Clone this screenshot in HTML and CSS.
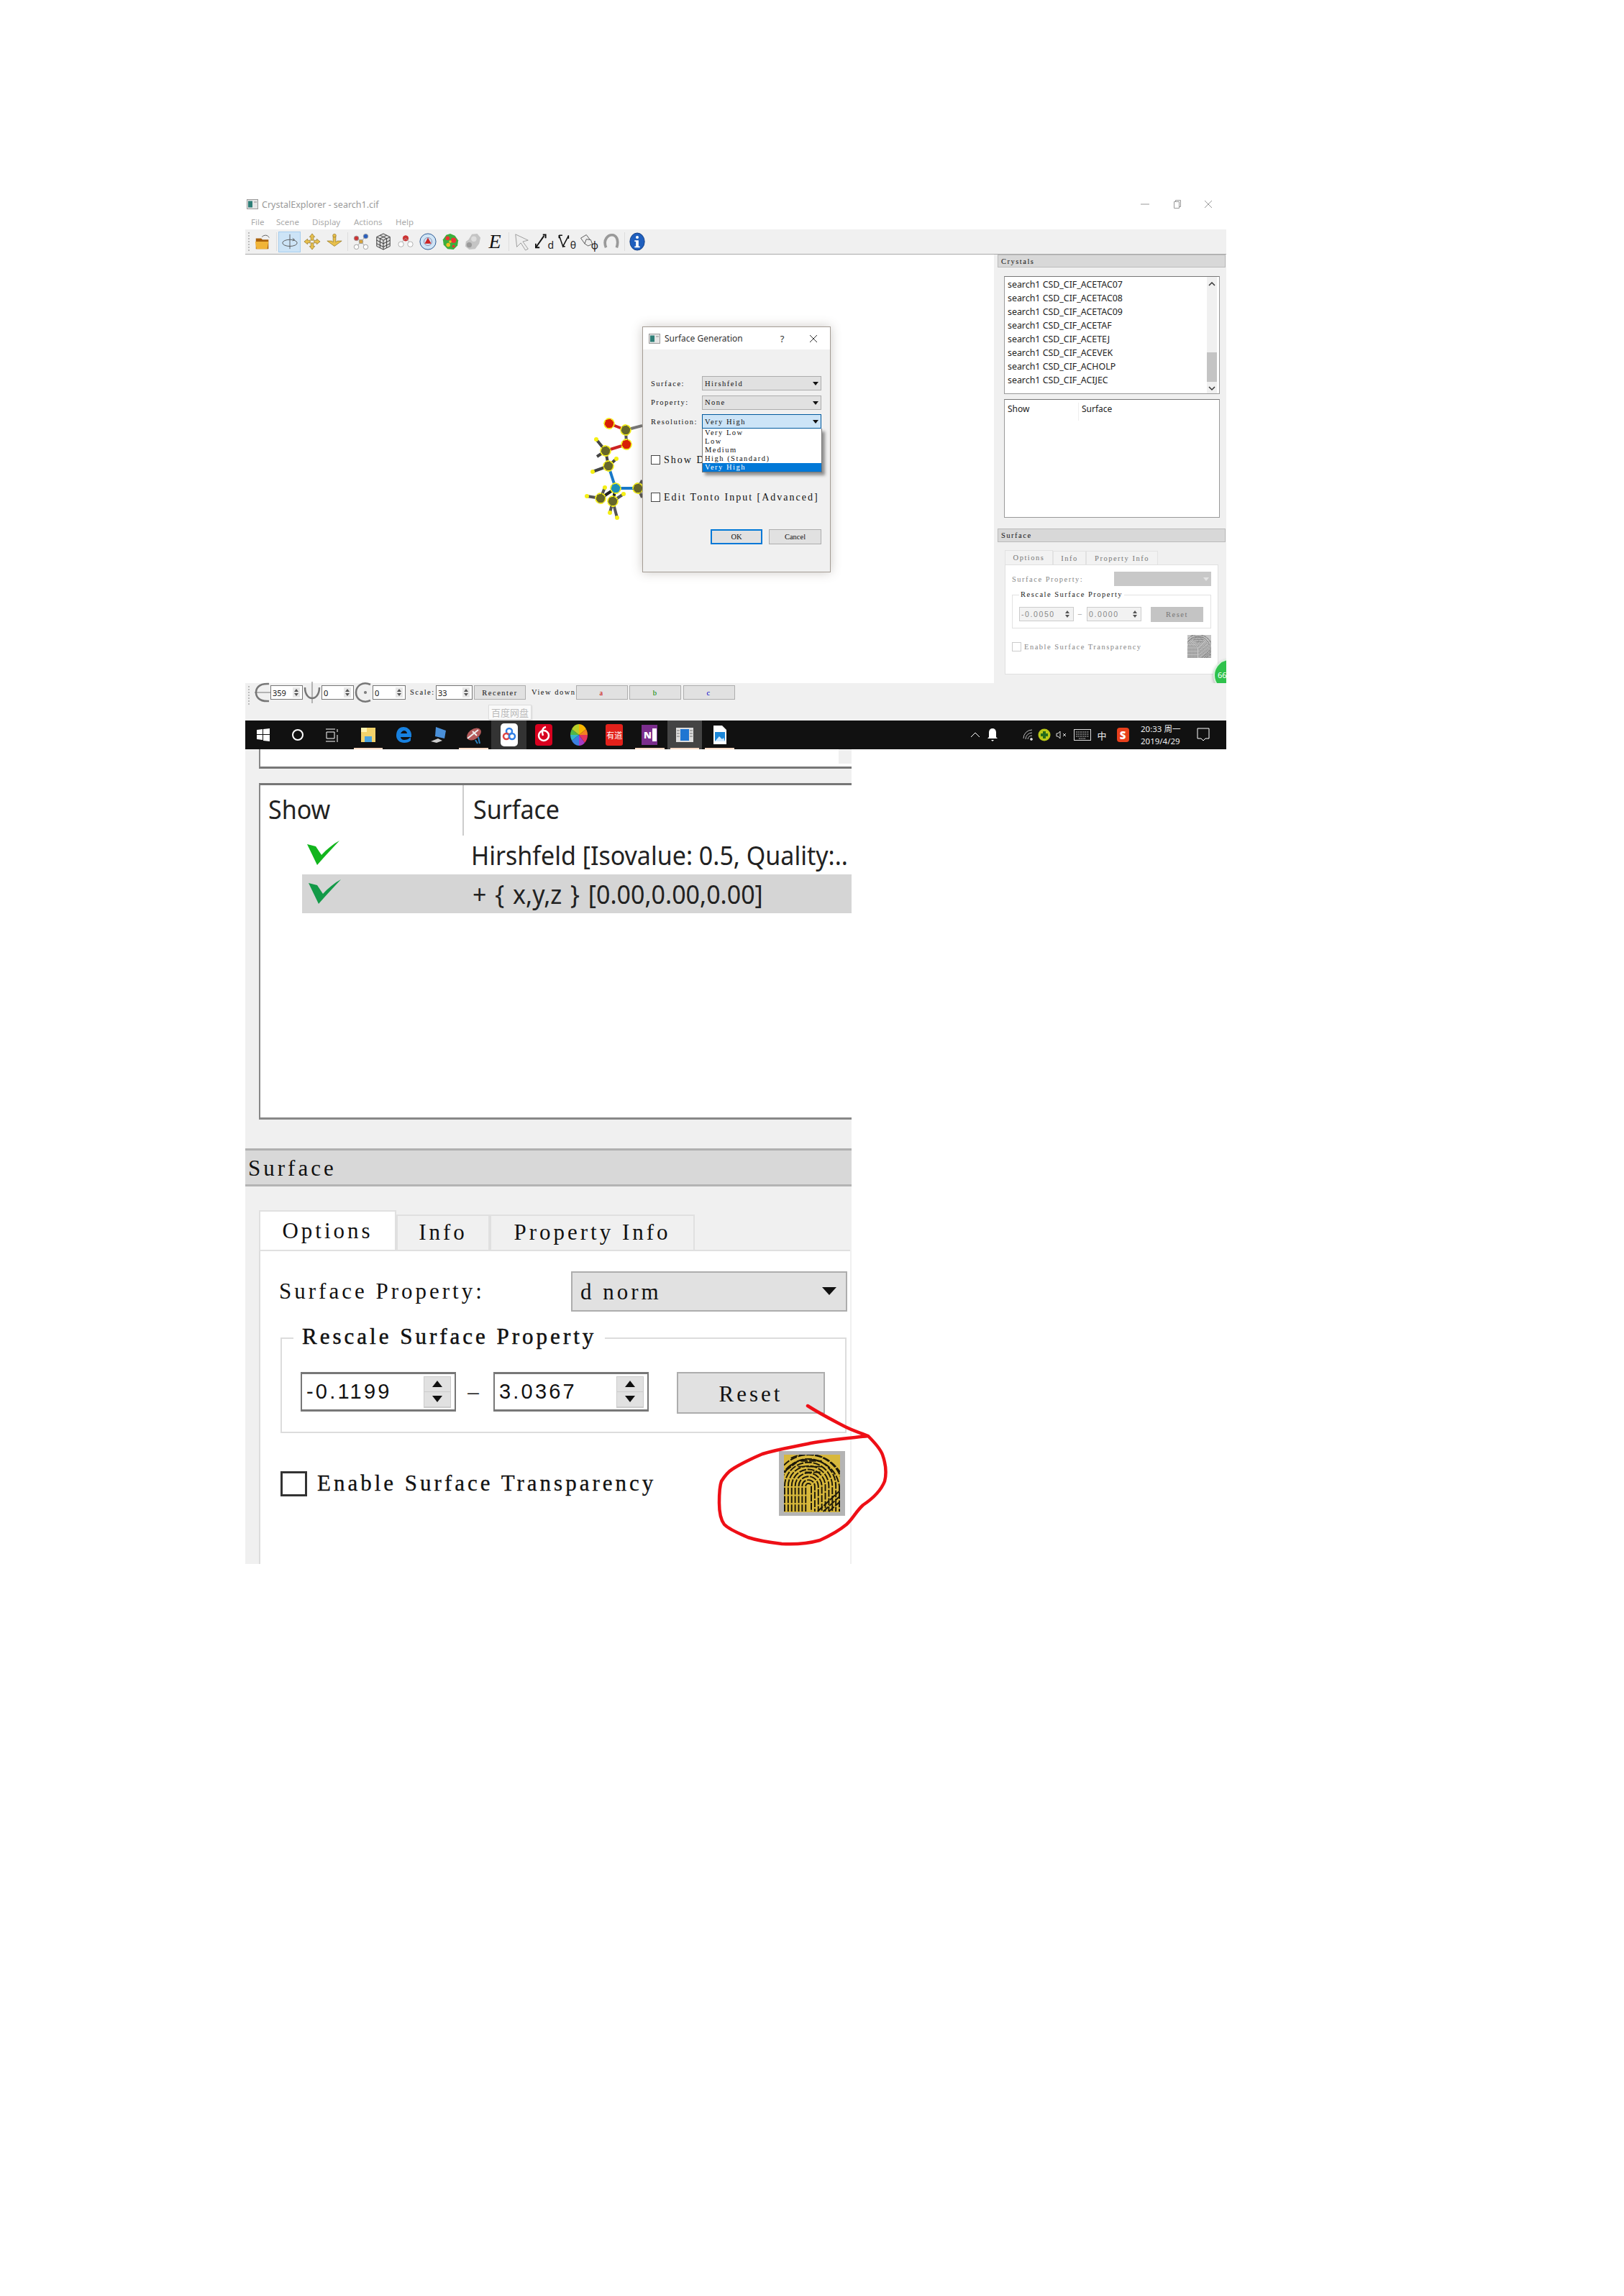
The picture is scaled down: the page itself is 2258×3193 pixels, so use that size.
FILE: index.html
```html
<!DOCTYPE html>
<html lang="en">
<head>
<meta charset="utf-8">
<title>CrystalExplorer surface transparency</title>
<link rel="stylesheet" href="styles.css">
</head>
<body>
<svg class="defs" width="0" height="0">
  <defs>
    <symbol id="fp" viewBox="0 0 80 80">
      <g fill="none" stroke-width="2" stroke-dasharray="10 2">
        <path d="M31 80V44a4 4 0 0 1 8 0V80"/>
        <path d="M26 80V44a9 9 0 0 1 18 0V80"/>
        <path d="M21 80V44a14 14 0 0 1 28 0V80"/>
        <path d="M16 80V44a19 19 0 0 1 38 0V80"/>
        <path d="M11 80V44a24 24 0 0 1 48 0V80"/>
        <path d="M6 80V44a29 29 0 0 1 58 0V80"/>
        <path d="M1 80V44a34 34 0 0 1 68 0V80"/>
        <path d="M-4 60V44a39 39 0 0 1 78 0V80"/>
        <path d="M-4 30a44 44 0 0 1 83 14V80"/>
        <path d="M0 14a49 49 0 0 1 84 30"/>
        <path d="M10 4a54 54 0 0 1 70 20"/>
        <path d="M2 22l16-12M24 8h30M20 16h34M30 24h24M56 80l24-22M48 80l32-30M64 80l16-14"/>
      </g>
    </symbol>
    <symbol id="appicon" viewBox="0 0 16 14">
      <rect x=".5" y=".5" width="15" height="13" fill="#e6e6e6" stroke="#999"/>
      <rect x="2" y="2.5" width="6" height="9" fill="#2f7f78"/>
      <rect x="10" y="3" width="4" height="2" fill="#bbb"/>
    </symbol>
    <symbol id="check" viewBox="0 0 45 34">
      <path d="M0 5l12 3 8 12C27 12 36 5 45 0 36 10 26 20 14 34z"/>
    </symbol>
  </defs>
</svg>

<main class="page">
  <section class="app">
    <div class="titlebar">
      <svg class="appicon"><use href="#appicon"/></svg>
      <span class="apptitle">CrystalExplorer - search1.cif</span>
      <div class="winctl">
        <svg width="14" height="14" viewBox="0 0 14 14"><path d="M1 7h12" stroke="#999"/></svg>
        <svg width="14" height="14" viewBox="0 0 14 14"><path d="M3.5 3.5h7v9h-7zM5.5 3.5v-2h7v9h-2" fill="none" stroke="#999"/></svg>
        <svg width="14" height="14" viewBox="0 0 14 14"><path d="M2 2l10 10M12 2L2 12" stroke="#999"/></svg>
      </div>
    </div>
    <nav class="menubar"><span>File</span><span>Scene</span><span>Display</span><span>Actions</span><span>Help</span></nav>

    <div class="toolbar">
      <i class="grip"></i>
      <span class="tool"><svg viewBox="0 0 26 26"><path d="M3 8h8l2 2h9v14H3z" fill="#a8600c"/><path d="M2 13h20l-2 11H4z" fill="#f1b437"/><path d="M12 6c4-4 9-3 11 1" fill="none" stroke="#555"/></svg></span>
      <i class="sep"></i>
      <span class="tool on"><svg viewBox="0 0 26 26" fill="none" stroke="#555"><path d="M13 2v22"/><ellipse cx="13" cy="15" rx="11" ry="5"/><path d="M17 8l3 2-3 2" /></svg></span>
      <span class="tool"><svg viewBox="0 0 26 26" fill="#e8c04c" stroke="#8a6d1c" stroke-width=".7"><path d="M13 1l4 5h-2v5h-4V6H9zM13 25l-4-5h2v-5h4v5h2zM1 13l5-4v2h4v4H6v2zM25 13l-5 4v-2h-4v-4h4V9z"/></svg></span>
      <span class="tool"><svg viewBox="0 0 26 26" fill="#e8c04c" stroke="#8a6d1c" stroke-width=".7"><path d="M13 20L2 12h7l2 2V5h4v9l2-2h7z"/><circle cx="13" cy="4" r="2.5"/></svg></span>
      <i class="sep"></i>
      <span class="tool"><svg viewBox="0 0 26 26" stroke="#999" fill="#fff"><path d="M7 7l6 6M20 5l-7 8M13 13l-7 8M13 13l7 8" fill="none"/><circle cx="6" cy="8" r="3.5" fill="#c33"/><circle cx="20" cy="5" r="3.5" fill="#2a5fbf"/><circle cx="13" cy="13" r="3" fill="#d9a33a"/><circle cx="6" cy="21" r="3.5"/><circle cx="20" cy="21" r="3.5"/></svg></span>
      <span class="tool"><svg viewBox="0 0 26 26" fill="#ddd" stroke="#333"><path d="M13 1l10 5v14l-10 5-10-5V6z"/><path d="M3 6l10 5 10-5M13 11v14M8 3.500l10 5v14M18 3.500L8 8.500v14M3 11l10 5 10-5M3 16l10 5 10-5" fill="none"/></svg></span>
      <span class="tool"><svg viewBox="0 0 26 26" stroke="#aaa" fill="#fff"><circle cx="13" cy="8" r="4" fill="#c33" stroke="#c33"/><path d="M13 8l-7 7M13 8l7 7" fill="none"/><circle cx="6" cy="17" r="4"/><circle cx="20" cy="17" r="4"/></svg></span>
      <span class="tool"><svg viewBox="0 0 26 26"><circle cx="13" cy="13" r="12" fill="#cfe4f5" stroke="#1f4e8c"/><circle cx="13" cy="13" r="6" fill="none" stroke="#88a"/><path d="M13 7l5 9H8z" fill="#c22"/></svg></span>
      <span class="tool"><svg viewBox="0 0 26 26"><path d="M13 1l7 3 5 7-1 8-6 6-9-1-6-6-1-8 5-7z" fill="#3cae3c"/><circle cx="9" cy="8" r="3" fill="#e33"/><circle cx="18" cy="11" r="4" fill="#e33"/><circle cx="10" cy="18" r="3" fill="#f0c020"/><circle cx="18" cy="20" r="2" fill="#e33"/><circle cx="13" cy="13" r="2" fill="#f0c020"/></svg></span>
      <span class="tool"><svg viewBox="0 0 26 26"><path d="M12 2l8-1 5 6-2 9-6 8-9 1-6-5 1-7 4-3z" fill="#c4c4c4"/><circle cx="8" cy="18" r="4" fill="#9a9a9a"/><circle cx="15" cy="9" r="4" fill="#ddd"/></svg></span>
      <span class="tool glyph-e">E</span>
      <i class="sep"></i>
      <span class="tool"><svg viewBox="0 0 26 26"><path d="M3 2l19 9-8 2 8 11-4 2-7-11-6 6z" fill="#eee" stroke="#999"/></svg></span>
      <span class="tool measure"><svg viewBox="0 0 26 26" fill="none" stroke="#111" stroke-width="2.500"><path d="M2 24L16 4"/><path d="M14 2l5 0 0 6M1 18v7h7" /></svg><b>d</b></span>
      <span class="tool measure"><svg viewBox="0 0 26 26" fill="none" stroke="#111" stroke-width="2"><path d="M3 3l7 20 10-19"/><path d="M3 3h6M3 3v5M20 3v6M9 23h5"/></svg><b>θ</b></span>
      <span class="tool measure"><svg viewBox="0 0 26 26" fill="#eee" stroke="#333"><path d="M2 8l10-6 6 8-9 8z"/><path d="M9 18l3-8 8 1 3 8-8 3z"/></svg><b>ϕ</b></span>
      <span class="tool"><svg viewBox="0 0 26 26" fill="none" stroke="#999" stroke-width="4"><path d="M5 22C0 10 8 3 14 3s11 7 7 19"/></svg></span>
      <i class="sep sep-b"></i>
      <span class="tool"><svg viewBox="0 0 26 26"><ellipse cx="13" cy="13" rx="11" ry="13" fill="#1f5fbe"/><ellipse cx="13" cy="13" rx="11" ry="13" fill="none" stroke="#0d3a80"/><circle cx="13" cy="6.500" r="2.200" fill="#fff"/><path d="M9 11h6v9h2v2H9v-2h2v-7H9z" fill="#fff"/></svg></span>
    </div>

    <div class="workspace">
      <div class="canvas">
        <svg class="molecule" viewBox="800 570 93 160" width="93" height="160">
          <g class="bonds">
            <path d="M870 598L893 592" stroke="#777"/>
            <path d="M847 589L870 598" stroke="#c22"/>
            <path d="M870 598L871 618" stroke="#555"/>
            <path d="M871 618L842 627" stroke="#c22"/>
            <path d="M842 627L829 611M842 627L830 635M842 627L846 648M846 648L857 638M846 648L824 656" stroke="#444"/>
            <path d="M846 648L856 679" stroke="#1878c8"/>
            <path d="M856 679L887 679" stroke="#1878c8"/>
            <path d="M856 679L835 693M856 679L852 697" stroke="#222"/>
            <path d="M835 693L816 690M835 693L841 678M852 697L867 687M852 697L848 713M852 697L858 720M887 679L893 668M887 679L893 692" stroke="#555"/>
          </g>
          <g class="atoms">
            <circle class="o" cx="847" cy="589" r="7"/><circle class="o" cx="871" cy="618" r="7"/>
            <circle class="c" cx="870" cy="598" r="7"/><circle class="c" cx="842" cy="627" r="7"/><circle class="c" cx="846" cy="648" r="7"/><circle class="c" cx="887" cy="679" r="7"/><circle class="c" cx="835" cy="693" r="7"/><circle class="c" cx="852" cy="697" r="7"/>
            <circle class="n" cx="856" cy="679" r="7"/>
          </g>
          <g class="hydrogens">
            <circle cx="829" cy="611" r="3"/><circle cx="857" cy="638" r="3"/><circle cx="824" cy="656" r="3"/><circle cx="816" cy="690" r="3"/><circle cx="841" cy="678" r="3"/><circle cx="867" cy="687" r="3"/><circle cx="848" cy="713" r="3"/><circle cx="858" cy="720" r="3"/>
          </g>
        </svg>

        <div class="dialog">
          <div class="dlg-title">
            <svg class="appicon"><use href="#appicon"/></svg>
            <span class="dlg-name">Surface Generation</span>
            <span class="dlg-help">?</span>
            <svg class="dlg-close" width="12" height="12" viewBox="0 0 12 12"><path d="M1 1l10 10M11 1L1 11" stroke="#333"/></svg>
          </div>
          <div class="dlg-body">
            <div class="dlg-row"><label>Surface:</label><div class="d-combo">Hirshfeld<i class="tri"></i></div></div>
            <div class="dlg-row"><label>Property:</label><div class="d-combo">None<i class="tri"></i></div></div>
            <div class="dlg-row"><label>Resolution:</label><div class="d-combo focus">Very High<i class="tri"></i></div></div>
            <div class="dlg-check first"><i class="box"></i><span>Show De</span></div>
            <div class="dlg-check"><i class="box"></i><span>Edit Tonto Input [Advanced]</span></div>
            <div class="dlg-btns"><button class="d-btn ok">OK</button><button class="d-btn">Cancel</button></div>
          </div>
          <ul class="dropdown">
            <li>Very Low</li><li>Low</li><li>Medium</li><li>High (Standard)</li><li class="sel">Very High</li>
          </ul>
        </div>
      </div>

      <aside class="dock">
        <div class="dock-head">Crystals</div>
        <div class="crystal-list">
          <ul>
            <li>search1 CSD_CIF_ACETAC07</li><li>search1 CSD_CIF_ACETAC08</li><li>search1 CSD_CIF_ACETAC09</li><li>search1 CSD_CIF_ACETAF</li><li>search1 CSD_CIF_ACETEJ</li><li>search1 CSD_CIF_ACEVEK</li><li>search1 CSD_CIF_ACHOLP</li><li>search1 CSD_CIF_ACIJEC</li>
          </ul>
          <div class="vscroll"><svg width="12" height="8" viewBox="0 0 12 8"><path d="M2 6l4-4 4 4" fill="none" stroke="#333" stroke-width="1.500"/></svg><i class="thumb"></i><svg width="12" height="8" viewBox="0 0 12 8"><path d="M2 2l4 4 4-4" fill="none" stroke="#333" stroke-width="1.500"/></svg></div>
        </div>
        <div class="surface-table"><span class="st-show">Show</span><span class="st-surface">Surface</span></div>
        <div class="dock-head second">Surface</div>
        <div class="tabs"><span class="tab active">Options</span><span class="tab">Info</span><span class="tab">Property Info</span></div>
        <div class="panel">
          <div class="p-row"><span>Surface Property:</span><div class="p-combo"><i class="tri pale"></i></div></div>
          <div class="p-group">
            <span class="p-legend">Rescale Surface Property</span>
            <div class="p-spin"><span>-0.0050</span><em class="arrows"><i class="up"></i><i class="dn"></i></em></div>
            <span class="p-dash">–</span>
            <div class="p-spin"><span>0.0000</span><em class="arrows"><i class="up"></i><i class="dn"></i></em></div>
            <div class="p-reset">Reset</div>
          </div>
          <div class="p-trans"><i class="p-box"></i><span>Enable Surface Transparency</span><svg class="p-swatch"><use href="#fp"/></svg></div>
        </div>
      </aside>
      <div class="badge">66</div>
    </div>

    <div class="statusbar">
      <i class="grip"></i>
      <svg class="rot r1" viewBox="0 0 23 30" fill="none" stroke="#777" stroke-width="2.500"><path d="M21 3C6 2 3 10 3 15s3 13 18 12"/><path d="M1 15h22" stroke-width="1"/></svg>
      <div class="s-spin w45"><span>359</span><em class="arrows"><i class="up"></i><i class="dn"></i></em></div>
      <svg class="rot r2" viewBox="0 0 26 30" fill="none" stroke="#777" stroke-width="2.500"><path d="M3 8c0 20 20 20 20 0"/><path d="M13 0v30" stroke-width="1"/></svg>
      <div class="s-spin w45"><span>0</span><em class="arrows"><i class="up"></i><i class="dn"></i></em></div>
      <svg class="rot r2" viewBox="0 0 26 30" fill="none" stroke="#777" stroke-width="2.500"><path d="M23 4C12-1 3 6 3 15s9 16 20 11"/><circle cx="16" cy="15" r=".8" fill="#777"/></svg>
      <div class="s-spin w46"><span>0</span><em class="arrows"><i class="up"></i><i class="dn"></i></em></div>
      <span class="s-label scale">Scale:</span>
      <div class="s-spin w51"><span>33</span><em class="arrows"><i class="up"></i><i class="dn"></i></em></div>
      <div class="s-btn recenter">Recenter</div>
      <span class="s-label viewd">View down:</span>
      <div class="s-btn axis a">a</div>
      <div class="s-btn axis b">b</div>
      <div class="s-btn axis c">c</div>
      <div class="tooltip">百度网盘</div>
    </div>

    <div class="taskbar">
      <div class="tasks">
        <span class="ti"><svg width="22" height="22" viewBox="0 0 22 22" fill="#fff"><path d="M2 4l8-1v7H2zM11 3l9-1v8h-9zM2 11h8v7l-8-1zM11 11h9v9l-9-1z"/></svg></span>
        <span class="ti"><svg width="18" height="18" viewBox="0 0 18 18"><circle cx="9" cy="9" r="7" fill="none" stroke="#fff" stroke-width="2"/></svg></span>
        <span class="ti"><svg width="20" height="22" viewBox="0 0 20 22" fill="none" stroke="#fff"><path d="M2 7h11v9H2zM1 3h13M1 20h13M17 3v4M17 11v10"/></svg></span>
        <span class="ti run"><svg width="24" height="24" viewBox="0 0 24 24"><path d="M2 2h20v20H2z" fill="#f3d36b"/><path d="M2 2h8v6H2z" fill="#fff3b0"/><path d="M7 14h10v8H7z" fill="#4aa3df"/></svg></span>
        <span class="ti"><svg width="22" height="24" viewBox="0 0 22 24"><path d="M11 1C4 1 1 7 1 13s5 10 11 10c4 0 7-1 9-3v-5c-3 3-6 4-9 4-3 0-5-2-5-4h15c1-8-4-14-11-14zM7 10c1-2 3-4 5-4s4 2 4 4z" fill="#1781e0"/></svg></span>
        <span class="ti"><svg width="26" height="26" viewBox="0 0 26 26"><path d="M9 2l14 5-2 11L8 15z" fill="#4a90d9"/><path d="M14 4v12M2 22l10-4 6 3-8 3z" fill="#ccc"/></svg></span>
        <span class="ti run"><svg width="28" height="26" viewBox="0 0 28 26"><ellipse cx="14" cy="12" rx="11" ry="7" transform="rotate(-35 14 12)" fill="#b45a5a"/><path d="M5 18L20 6M12 8l6 6" stroke="#eee" stroke-width="2"/><path d="M16 20l3 5M20 16l2 9" stroke="#2a80c0" stroke-width="2"/></svg></span>
        <span class="ti hover"><svg width="24" height="32" viewBox="0 0 24 32"><rect width="24" height="32" rx="5" fill="#fff"/><circle cx="12" cy="11" r="4" fill="none" stroke="#2f7fe6" stroke-width="2.500"/><circle cx="8" cy="18" r="4" fill="none" stroke="#d44" stroke-width="2.500"/><circle cx="16" cy="18" r="4" fill="none" stroke="#2f7fe6" stroke-width="2.500"/></svg></span>
        <span class="ti"><svg width="24" height="30" viewBox="0 0 24 30"><rect width="24" height="30" rx="4" fill="#d8011f"/><circle cx="12" cy="16" r="7" fill="none" stroke="#fff" stroke-width="2.500"/><path d="M15 4c-5 1-6 6-4 12" fill="none" stroke="#fff" stroke-width="2.500"/></svg></span>
        <span class="ti"><svg width="24" height="30" viewBox="0 0 24 30"><path d="M12 15L12 0a12 15 0 0 1 10 7z" fill="#f7b500"/><path d="M12 15L22 7a12 15 0 0 1 2 8z" fill="#f58220"/><path d="M12 15H24a12 15 0 0 1-4 11z" fill="#e5335d"/><path d="M12 15L20 26a12 15 0 0 1-8 4z" fill="#a43bc4"/><path d="M12 15V30A12 15 0 0 1 2 23z" fill="#3b7fe0"/><path d="M12 15L2 23A12 15 0 0 1 0 15z" fill="#36b4c8"/><path d="M12 15H0A12 15 0 0 1 2 7z" fill="#4fb847"/><path d="M12 15L2 7A12 15 0 0 1 12 0z" fill="#b7cf2a"/></svg></span>
        <span class="ti"><span class="youdao">有道</span></span>
        <span class="ti run"><span class="onenote"><b>N</b><i></i></span></span>
        <span class="ti active run"><svg width="24" height="24" viewBox="0 0 24 24"><rect y="2" width="24" height="20" fill="#ddd"/><rect x="6" y="4" width="12" height="16" fill="#1f76d2"/><path d="M1 6h4M1 10h4M1 14h4M19 6h4M19 10h4M19 14h4" stroke="#777"/></svg></span>
        <span class="ti run"><svg width="20" height="28" viewBox="0 0 20 28"><path d="M1 1h12l6 6v20H1z" fill="#fff"/><path d="M3 10h14v13H3z" fill="#1b87d9"/><path d="M3 23l6-7 4 4 2-2 2 5z" fill="#cfe9ff"/></svg></span>
      </div>
      <div class="tray">
        <span class="tr w20"><svg width="14" height="8" viewBox="0 0 14 8"><path d="M1 7l6-6 6 6" fill="none" stroke="#fff"/></svg></span>
        <span class="tr w28"><svg width="14" height="18" viewBox="0 0 14 18" fill="#fff"><path d="M7 0c3 0 5 2 5 6v6l2 2H0l2-2V6c0-4 2-6 5-6zM5 16h4l-2 2z"/></svg></span>
        <span class="tr w20 ml25"><svg width="16" height="18" viewBox="0 0 16 18" fill="none" stroke="#bbb"><path d="M2 14a12 12 0 0 1 12-12M5 15a9 9 0 0 1 9-9M8 15a6 6 0 0 1 6-5"/><circle cx="13" cy="15" r="1.500" fill="#eee"/></svg></span>
        <span class="tr w24 ml1"><svg width="18" height="20" viewBox="0 0 18 20"><circle cx="9" cy="10" r="8.500" fill="#b9c818"/><path d="M7 5h4v3h3v4h-3v3H7v-3H4V8h3z" fill="#246b1c"/></svg></span>
        <span class="tr w24"><svg width="16" height="14" viewBox="0 0 16 14" fill="none" stroke="#ddd"><path d="M1 5h2l3-3v10L3 9H1zM10 5l4 4M14 5l-4 4"/></svg></span>
        <span class="tr w34"><svg width="24" height="16" viewBox="0 0 24 16" fill="none" stroke="#ddd"><rect x=".5" y=".5" width="23" height="15"/><path d="M3 4h18M3 7h18M3 10h18M7 13h10" stroke-dasharray="1.500 1"/></svg></span>
        <span class="tr w20 zh">中</span>
        <span class="tr w28 ml5"><span class="sogou">S</span></span>
        <span class="clock"><span>20:33 周一</span><span>2019/4/29</span></span>
        <span class="tr w20 ml17"><svg width="18" height="20" viewBox="0 0 18 20" fill="none" stroke="#fff"><path d="M1 1h16v14h-5l-3 3-3-3H1z"/></svg></span>
      </div>
    </div>
  </section>

  <section class="closeup">
    <div class="cu-stub"><i class="cu-stub-scroll"></i></div>
    <div class="cu-table">
      <div class="cu-head"><div class="cu-show"><span class="cu-sans">Show</span></div><div class="cu-surface"><span class="cu-sans">Surface</span></div></div>
      <div class="cu-row">
        <svg class="cu-check bright"><use href="#check"/></svg>
        <span class="cu-sans">Hirshfeld [Isovalue: 0.5, Quality:..</span>
      </div>
      <div class="cu-row selected">
        <svg class="cu-check dull"><use href="#check"/></svg>
        <span class="cu-sans wide">+ { x,y,z } [0.00,0.00,0.00]</span>
      </div>
    </div>
    <div class="cu-dockhead">Surface</div>
    <div class="cu-tabs"><span class="cu-tab active">Options</span><span class="cu-tab info">Info</span><span class="cu-tab prop">Property Info</span></div>
    <div class="cu-panel">
      <div class="cu-prop"><span>Surface Property:</span><div class="cu-combo">d norm<i class="tri big"></i></div></div>
      <div class="cu-group">
        <span class="cu-legend">Rescale Surface Property</span>
        <div class="cu-spin"><span>-0.1199</span><em class="cu-arrows"><b><i class="up"></i></b><b><i class="dn"></i></b></em></div>
        <span class="cu-dash">–</span>
        <div class="cu-spin"><span>3.0367</span><em class="cu-arrows"><b><i class="up"></i></b><b><i class="dn"></i></b></em></div>
        <div class="cu-reset">Reset</div>
      </div>
      <div class="cu-trans"><i class="cu-box"></i><span>Enable Surface Transparency</span><div class="cu-swatch"><svg><use href="#fp"/></svg></div></div>
    </div>
  </section>

  <svg class="scribble" viewBox="990 1950 250 210" width="250" height="210">
    <path d="M1123 1955C1140 1966 1156 1974 1173 1983C1186 1990 1198 1993 1207 1997C1216 2006 1224 2015 1227 2023C1232 2037 1233 2048 1230 2060C1224 2075 1212 2085 1200 2093C1190 2102 1186 2112 1177 2120C1165 2130 1153 2136 1140 2142C1122 2147 1105 2148 1087 2147C1070 2145 1055 2143 1040 2138C1027 2132 1015 2128 1007 2120C1001 2112 1000 2100 1000 2090C1000 2078 1000 2068 1003 2060C1008 2052 1013 2046 1020 2042C1033 2034 1046 2028 1060 2022C1082 2015 1105 2012 1127 2007C1155 2002 1180 2000 1207 1997" fill="none" stroke="#ee0f16" stroke-width="4.500" stroke-linecap="round" stroke-linejoin="round"/>
  </svg>
</main>
</body>
</html>
```
FILE: styles.css
```css
* { box-sizing: border-box; }
html, body { margin: 0; padding: 0; background: #fff; }
body { font-family: "Noto Sans", sans-serif; }
i, em { font-style: normal; display: block; }
ul { list-style: none; margin: 0; padding: 0; }
.defs { position: absolute; }
.page { position: relative; width: 2258px; height: 3193px; padding: 270px 0 0 341px; }

/* small screenshot */
.app { position: relative; width: 1364px; height: 772px; display: flex; flex-direction: column; overflow: hidden; }
.titlebar { height: 30px; display: flex; align-items: center; padding: 0 0 2px 2px; flex: none; }
.appicon { width: 16px; height: 14px; flex: none; }
.apptitle { margin-left: 5px; font-size: 12.5px; color: #999; }
.winctl { margin-left: auto; display: flex; gap: 30px; padding-right: 18px; }
.menubar { height: 19px; flex: none; display: flex; align-items: center; font-size: 11.500px; color: #aaa; padding: 0 0 3px 8px; }
.menubar span:nth-child(1) { width: 35px; }
.menubar span:nth-child(2) { width: 50px; }
.menubar span:nth-child(3) { width: 58px; }
.menubar span:nth-child(4) { width: 58px; }
.toolbar { height: 35px; flex: none; background: #f0f0f0; border-bottom: 1px solid #aaa; display: flex; align-items: center; padding-left: 8.500px; position: relative; }
.grip { position: absolute; left: 4px; top: 4px; bottom: 4px; width: 2px; border-left: 2px dotted #bbb; }
.tool { width: 31px; height: 29px; flex: none; display: flex; align-items: center; justify-content: center; position: relative; }
.tool svg { width: 24px; height: 26px; }
.tool.on { background: #cde4f7; border: 1px solid #a5cdef; }
.sep { width: 6.500px; flex: none; height: 26px; position: relative; }
.sep::after { content: ""; position: absolute; left: 3px; top: 0; bottom: 0; width: 1px; background: #ddd; }
.sep-b { width: 5px; }
.glyph-e { font: italic 28px "Liberation Serif", serif; color: #111; }
.measure svg { width: 20px; height: 22px; margin: -2px 6px 0 0; }
.measure b { position: absolute; right: 2px; bottom: 1px; font: 400 14px "Noto Sans", sans-serif; color: #222; }

.workspace { position: relative; height: 596px; flex: none; display: flex; }
.canvas { position: relative; width: 1041px; flex: none; background: #fff; }
.molecule { position: absolute; left: 459px; top: 216px; }
.bonds path { fill: none; stroke-width: 4; }
.atoms circle { stroke: #f4ee1a; stroke-width: 1.800; stroke-dasharray: 6 1; }
.atoms .o { fill: #d81e05; }
.atoms .c { fill: #66662a; }
.atoms .n { fill: #1d8fb8; }
.hydrogens circle { fill: #f5ef14; }

.dialog { position: absolute; left: 552px; top: 100px; width: 262px; height: 342px; background: #f0f0f0; border: 1px solid #a49c94; box-shadow: 0 0 14px rgba(90, 80, 70, .3); display: flex; flex-direction: column; font: 10.500px "Liberation Serif", serif; letter-spacing: 1.500px; color: #111; }
.dlg-title { height: 31px; flex: none; background: #fff; display: flex; align-items: center; padding-left: 8px; font-family: "Noto Sans", sans-serif; letter-spacing: 0; }
.dlg-name { margin-left: 6px; font-size: 12px; color: #333; }
.dlg-help { margin-left: 52px; font-size: 13px; color: #333; }
.dlg-close { margin-left: 35px; }
.dlg-body { padding: 37px 12px 0 11px; }
.dlg-row { display: flex; align-items: center; height: 20px; margin-bottom: 6.500px; }
.dlg-row label { width: 71px; flex: none; }
.d-combo { width: 167px; height: 20px; background: #e1e1e1; border: 1px solid #adadad; display: flex; align-items: center; padding-left: 3px; position: relative; }
.d-combo.focus { background: #cce4f7; border-color: #005a9e; }
.tri { position: absolute; right: 3px; top: 50%; margin-top: -2px; border-left: 4px solid transparent; border-right: 4px solid transparent; border-top: 5px solid #111; }
.tri.pale { border-top-color: #e4e4e4; }
.tri.big { right: 13px; margin-top: -6px; border-left-width: 10px; border-right-width: 10px; border-top-width: 11px; }
.dlg-check { display: flex; align-items: center; height: 13px; margin-top: 39px; font-size: 14px; letter-spacing: 2px; }
.dlg-check.first { margin-top: 37px; }
.dlg-check span { margin-left: 5px; white-space: nowrap; }
.box { width: 13px; height: 13px; background: #fff; border: 1px solid #444; flex: none; }
.dlg-btns { display: flex; justify-content: flex-end; gap: 9px; margin-top: 38px; }
.d-btn { width: 73px; height: 21px; padding: 0; background: #e1e1e1; border: 1px solid #adadad; font: inherit; color: #111; }
.d-btn.ok { border: 2px solid #0078d7; width: 72px; }
.dropdown { position: absolute; left: 82px; top: 141px; width: 167px; height: 61px; background: #fff; border: 1px solid #777; border-top: 0; box-shadow: 4px 4px 4px rgba(0, 0, 0, .4); }
.dropdown li { height: 12px; line-height: 12px; padding-left: 3px; }
.dropdown .sel { background: #0078d7; color: #fff; }

.dock { width: 323px; flex: none; background: #f0f0f0; padding-left: 5px; font-family: "Noto Sans", sans-serif; }
.dock-head { width: 317px; height: 18px; background: #d8d8d8; border: 1px solid #bbb; font: 10.500px/18px "Liberation Serif", serif; letter-spacing: 1.500px; color: #111; padding-left: 4px; }
.dock-head.second { margin-top: 15px; height: 19px; }
.crystal-list { margin: 12px 0 0 9px; width: 300px; height: 164px; background: #fff; border: 1px solid #999; border-top-color: #777; display: flex; position: relative; }
.crystal-list ul { padding: 1px 0 0 4px; flex: 1; }
.crystal-list li { height: 19px; line-height: 19px; font-size: 12.400px; color: #222; }
.vscroll { width: 14px; margin: 0 3px 0 0; background: #f0f0f0; display: flex; flex-direction: column; align-items: center; padding-top: 6px; }
.thumb { width: 14px; height: 41px; background: #c4c4c4; margin-top: 91px; margin-bottom: 5px; }
.surface-table { margin: 7px 0 0 9px; width: 300px; height: 165px; background: #fff; border: 1px solid #999; border-top-color: #777; display: flex; font-size: 12px; color: #222; padding: 4px 0 0 4px; }
.st-show { width: 99px; height: 25px; border-right: 1px solid #eee; flex: none; }
.st-surface { padding-left: 4px; }
.tabs { margin: 11px 0 0 10px; height: 20px; display: flex; align-items: flex-end; font: 10.500px "Liberation Serif", serif; letter-spacing: 1.500px; color: #777; }
.tab { height: 19px; background: #f2f2f2; border: 1px solid #e2e2e2; border-bottom: 0; display: flex; align-items: center; justify-content: center; }
.tab:nth-child(1) { width: 67px; height: 20px; }
.tab:nth-child(2) { width: 46px; }
.tab:nth-child(3) { width: 100px; }
.panel { margin-left: 10px; width: 297px; height: 153px; background: #fff; border: 1px solid #e0e0e0; padding: 9px 9px 0; font: 10.500px "Liberation Serif", serif; letter-spacing: 1.500px; color: #888; }
.p-row { display: flex; align-items: center; justify-content: space-between; height: 20px; }
.p-combo { width: 135px; height: 20px; background: #c8c8c8; position: relative; }
.p-group { position: relative; margin-top: 12px; width: 277px; height: 47px; border: 1px solid #e2e2e2; display: flex; align-items: flex-start; padding: 16px 0 0 9px; }
.p-legend { position: absolute; left: 9px; top: -7px; padding: 0 2px; background: #fff; color: #222; white-space: nowrap; }
.p-spin { width: 76px; height: 20px; background: #f2f2f2; border: 1px solid #ccc; display: flex; align-items: center; justify-content: space-between; padding: 0 5px 0 2px; font: 10.500px "Liberation Sans", sans-serif; letter-spacing: 1.600px; }
.arrows { display: flex; flex-direction: column; gap: 2px; }
.up { border-left: 3px solid transparent; border-right: 3px solid transparent; border-bottom: 4px solid #555; }
.dn { border-left: 3px solid transparent; border-right: 3px solid transparent; border-top: 4px solid #555; }
.p-dash { width: 18px; text-align: center; line-height: 20px; }
.p-reset { margin-left: 13px; width: 73px; height: 21px; background: #c4c4c4; display: flex; align-items: center; justify-content: center; color: #777; }
.p-trans { display: flex; align-items: center; margin-top: 9px; height: 32px; }
.p-box { width: 13px; height: 13px; border: 1px solid #ccc; flex: none; }
.p-trans span { margin-left: 4px; }
.p-swatch { margin-left: auto; width: 33px; height: 32px; background: #c6c6c6; stroke: #777; }
.badge { position: absolute; left: 1346px; top: 562px; width: 46px; height: 46px; border-radius: 50%; background: #2fc24c; border: 2px solid #d9f2dd; box-shadow: 0 2px 4px rgba(0, 0, 0, .3); color: #fff; font: 11px/42px "Noto Sans", sans-serif; padding-left: 4px; }

.statusbar { height: 52px; flex: none; background: #f0f0f0; display: flex; align-items: flex-start; padding: 3px 0 0 12px; position: relative; font: 10.500px "Liberation Serif", serif; letter-spacing: 1.500px; color: #111; }
.statusbar > .grip { top: 4px; bottom: 22px; }
.rot { height: 30px; flex: none; margin-top: -5px; }
.r1 { width: 23px; }
.r2 { width: 26px; }
.s-spin { height: 20px; background: #fff; border: 1px solid #777; display: flex; align-items: center; justify-content: space-between; padding: 0 3px 0 2px; flex: none; font-size: 11px; letter-spacing: 0; font-family: "Noto Sans", sans-serif; }
.s-spin .arrows { background: #e8e8e8; padding: 2px; }
.w45 { width: 45px; }
.w46 { width: 46px; }
.w51 { width: 51px; }
.s-label { line-height: 20px; white-space: nowrap; flex: none; }
.scale { margin-left: 6px; width: 36px; }
.viewd { margin-left: 8px; width: 59px; }
.s-btn { height: 20px; background: #e1e1e1; border: 1px solid #adadad; display: flex; align-items: center; justify-content: center; flex: none; }
.recenter { margin-left: 2px; width: 72px; }
.axis { width: 72px; margin-left: 2.500px; }
.axis.a { color: #c00; }
.axis.b { color: #080; }
.axis.c { color: #00c; }
.tooltip { position: absolute; left: 338px; top: 30px; width: 60px; height: 21px; background: #fafafa; border: 1px solid #ddd; font: 13px "Noto Sans CJK SC", sans-serif; letter-spacing: 0; color: #bbb; display: flex; align-items: center; justify-content: center; box-shadow: 1px 1px 2px rgba(0, 0, 0, .1); }

.taskbar { height: 40px; flex: none; background: #111; display: flex; align-items: center; }
.tasks { display: grid; grid-template-columns: 50px 45px 51.500px repeat(11, 48.900px); height: 40px; }
.ti { position: relative; display: flex; align-items: center; justify-content: center; height: 40px; }
.ti.run::after { content: ""; position: absolute; left: 4px; right: 4px; bottom: 0; height: 2px; background: #f7d9c4; }
.ti.hover { background: #333; }
.ti.active { background: #444; }
.youdao { width: 24px; height: 30px; background: #e3211b; border-radius: 3px; color: #fff; font: 11px/30px "Noto Sans CJK SC", sans-serif; text-align: center; white-space: nowrap; overflow: hidden; }
.onenote { width: 22px; height: 28px; background: #7b2e8d; display: flex; color: #fff; font: 700 13px/28px "Noto Sans", sans-serif; padding-left: 3px; }
.onenote i { width: 6px; margin: 5px 0 5px 1px; background: #fff; }
.tray { margin-left: auto; padding-right: 22px; display: flex; align-items: center; height: 40px; color: #eee; }
.tr { display: flex; align-items: center; justify-content: center; flex: none; }
.w20 { width: 20px; }
.w24 { width: 24px; }
.w28 { width: 28px; }
.w34 { width: 34px; }
.ml1 { margin-left: 1px; }
.ml5 { margin-left: 5px; }
.ml17 { margin-left: 17px; }
.ml25 { margin-left: 25px; }
.zh { font: 13px "Noto Sans CJK SC", sans-serif; }
.sogou { width: 17px; height: 20px; background: #e8401c; border-radius: 4px; color: #fff; font: 900 15px/20px "Noto Sans", sans-serif; text-align: center; }
.clock { margin-left: 11px; width: 60px; display: flex; flex-direction: column; font: 11.500px/17px "Noto Sans", "Noto Sans CJK SC", sans-serif; white-space: nowrap; }

/* enlarged crop */
.closeup { width: 843px; height: 1133px; background: #f0f0f0; overflow: hidden; font: 31px "Liberation Serif", serif; letter-spacing: 4px; color: #111; }
.cu-stub { position: relative; margin-left: 19px; height: 27px; background: #fff; border-left: 2px solid #888; border-bottom: 3px solid #777; }
.cu-stub-scroll { position: absolute; right: 0; top: 0; bottom: 4px; width: 18px; background: #f0f0f0; }
.cu-table { margin: 20px 0 0 19px; height: 468px; background: #fff; border-top: 3px solid #777; border-left: 2px solid #888; border-bottom: 3px solid #888; letter-spacing: 0; }
.cu-sans { display: inline-block; font: 34px/1 "Noto Sans", sans-serif; color: #222; white-space: nowrap; transform-origin: left center; transform: scaleY(1.080); }
.cu-head { display: flex; height: 70px; }
.cu-show { width: 283px; padding: 16px 0 0 11px; border-right: 2px solid #ccc; }
.cu-surface { padding: 16px 0 0 13px; }
.cu-row { position: relative; height: 54px; display: flex; align-items: center; padding-left: 293px; }
.cu-sans.wide { word-spacing: 3px; }
.cu-row.selected { margin-left: 58px; padding-left: 237px; background: #d5d5d5; }
.cu-check { position: absolute; left: 65px; top: 7px; width: 45px; height: 34px; }
.selected .cu-check { left: 9px; top: 7px; }
.bright { fill: #12b51d; }
.dull { fill: #139a48; }
.cu-dockhead { margin-top: 40px; height: 53px; background: #d8d8d8; border-top: 3px solid #b0b0b0; border-bottom: 3px solid #b4b4b4; line-height: 50px; padding-left: 4px; }
.cu-tabs { margin: 33px 0 0 19px; height: 55px; display: flex; align-items: flex-end; }
.cu-tab { height: 49px; background: #f0f0f0; border: 2px solid #e0e0e0; border-bottom: 0; line-height: 46px; text-align: center; }
.cu-tab.active { width: 191px; height: 55px; background: #fff; line-height: 54px; }
.cu-tab.info { width: 130px; }
.cu-tab.prop { width: 285px; }
.cu-panel { margin-left: 19px; width: 822px; height: 437px; background: #fff; border-top: 2px solid #e0e0e0; border-left: 2px solid #ddd; padding-top: 28px; }
.cu-prop { display: flex; align-items: center; padding-left: 26px; height: 56px; }
.cu-prop > span { width: 406px; flex: none; }
.cu-combo { position: relative; width: 384px; height: 56px; background: #e1e1e1; border: 2px solid #adadad; line-height: 54px; padding-left: 11px; }
.cu-group { position: relative; margin: 36px 0 0 28px; width: 787px; height: 133px; border: 2px solid #dcdcdc; display: flex; align-items: flex-start; padding: 46px 0 0 26px; }
.cu-legend { position: absolute; left: 16px; top: -20px; padding: 0 12px; background: #fff; line-height: 34px; white-space: nowrap; -webkit-text-stroke: .5px #111; }
.cu-spin { width: 216px; height: 55px; border: 3px solid #777; border-left-width: 2px; border-right-width: 2px; display: flex; align-items: center; justify-content: space-between; padding: 0 5px 0 6px; flex: none; background: #fff; font: 29px "Liberation Sans", sans-serif; letter-spacing: 3.200px; }
.cu-spin span { display: inline-block; }
.cu-arrows { width: 38px; height: 44px; background: #e1e1e1; border: 1px solid #ccc; display: flex; flex-direction: column; }
.cu-arrows b { flex: 1; display: flex; align-items: center; justify-content: center; border-bottom: 1px solid #ccc; }
.cu-arrows .up { border-left-width: 7px; border-right-width: 7px; border-bottom: 9px solid #111; }
.cu-arrows .dn { border-left-width: 7px; border-right-width: 7px; border-top: 9px solid #111; }
.cu-dash { width: 52px; text-align: center; line-height: 55px; flex: none; }
.cu-reset { margin-left: 39px; width: 206px; height: 58px; background: #e1e1e1; border: 2px solid #adadad; text-align: center; line-height: 58px; flex: none; }
.cu-trans { display: flex; align-items: center; margin-top: 25px; padding: 0 7px 0 28px; height: 90px; }
.cu-box { width: 37px; height: 35px; border: 3px solid #333; flex: none; }
.cu-trans span { margin-left: 14px; -webkit-text-stroke: .3px #111; }
.cu-swatch { margin-left: auto; width: 92px; height: 90px; background: #b4b4b4; padding: 5px 7px; }
.cu-swatch svg { display: block; width: 78px; height: 80px; background: #d8b83c; stroke: #1c180a; }

.scribble { position: absolute; left: 990px; top: 1950px; pointer-events: none; }
```
